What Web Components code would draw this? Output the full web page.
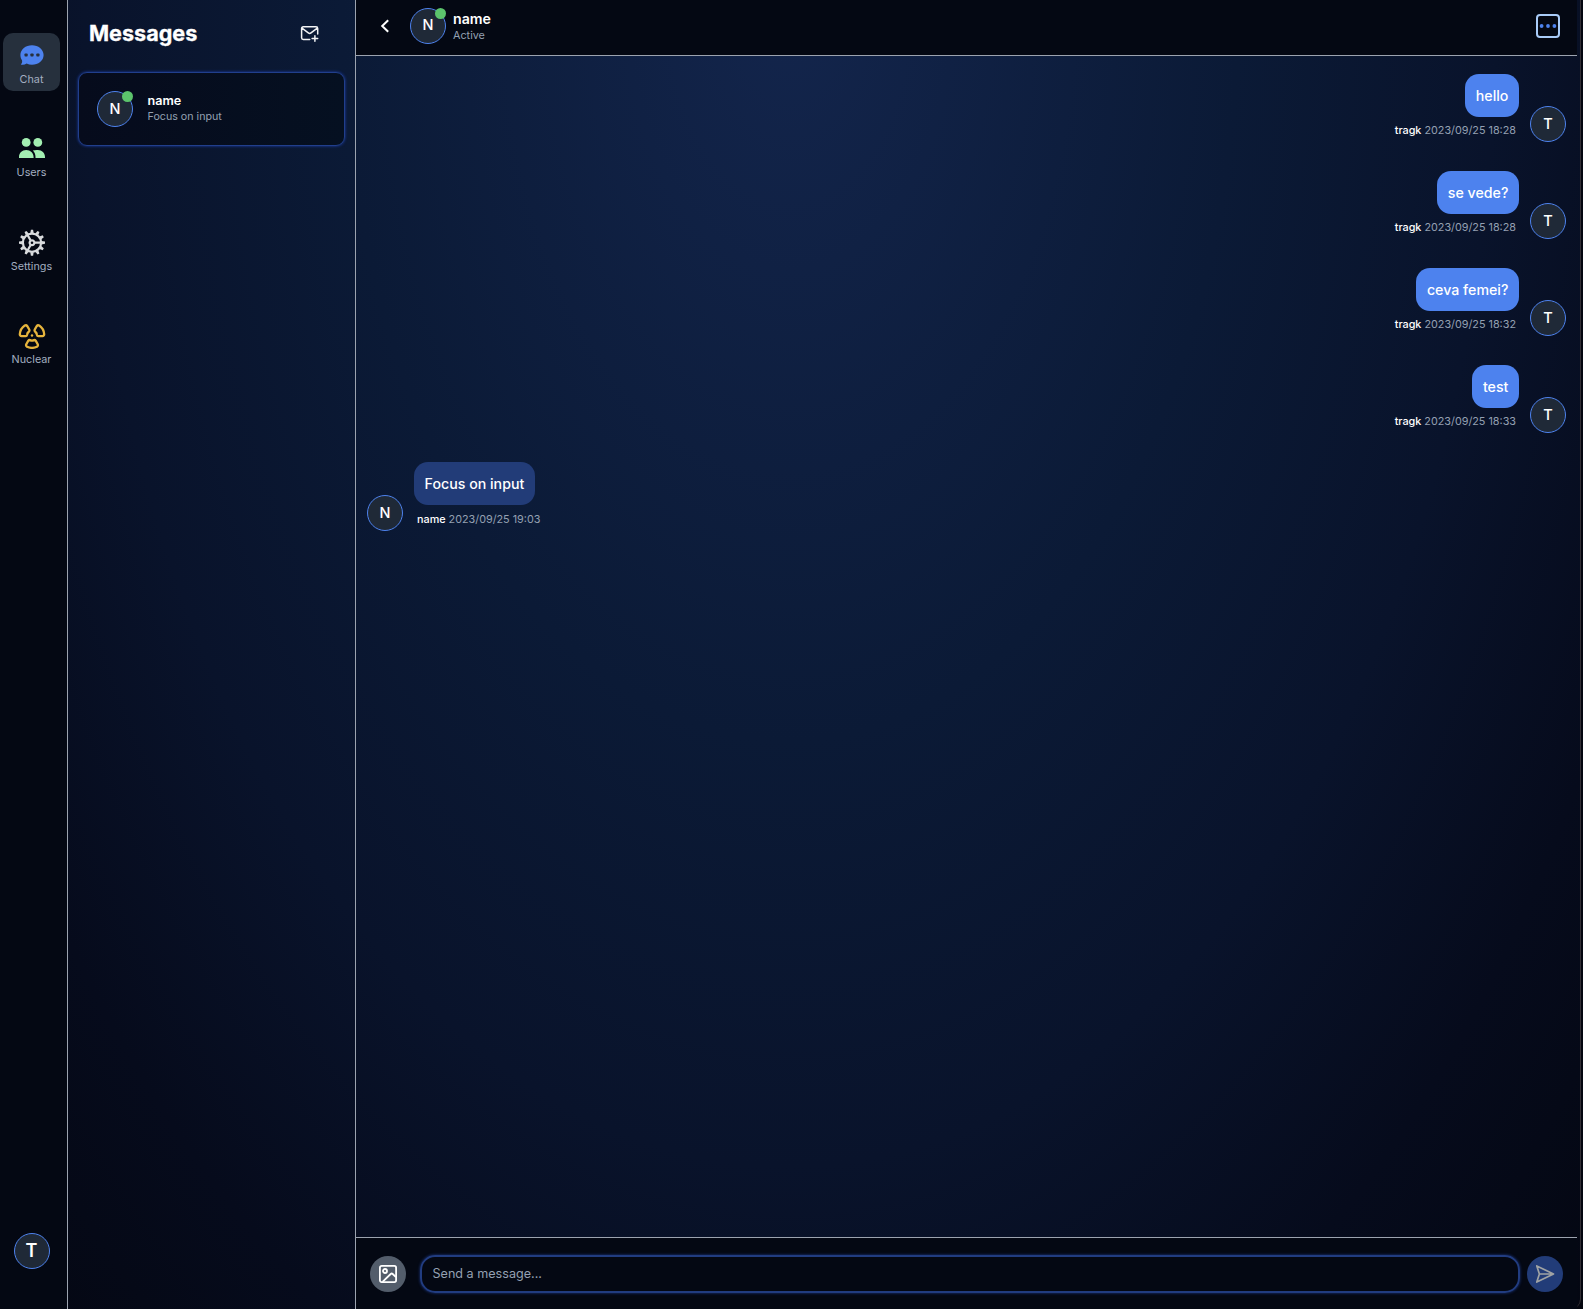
<!DOCTYPE html>
<html lang="en">
<head>
<meta charset="utf-8">
<title>Messages</title>
<style>
html,body{margin:0;height:100%;overflow:hidden;background:#04060f}
body{font-family:Inter,"Liberation Sans",sans-serif}
</style>
</head>
<body>
<chat-app></chat-app>
<script>
const define = (name, render) => customElements.define(name, class extends HTMLElement {
  connectedCallback() {
    if (this.shadowRoot) return;
    this.attachShadow({ mode: 'open' }).innerHTML = render(this);
  }
});

const teeth = Array.from({length: 12}, (_, i) => `<path d="M-1.7-9.5L-1.1-13H1.1L1.7-9.5z" transform="rotate(${i * 30})"/>`).join('');
const blade = 'M-2 4.6Q0 5.5 2 4.6Q3 4.3 3.7 5.2L5.7 8.7Q6.4 10.3 5 11.2Q0 13.6-5 11.2Q-6.4 10.3-5.7 8.7L-3.7 5.2Q-3 4.3-2 4.6z';
const icons = {
  chat: `<svg width="28" height="28" viewBox="-14 -14 28 28"><path fill="#4d82ee" d="M0-9.8C6.3-9.8 11.6-5.6 11.6 0S6.3 9.8 0 9.8C-2 9.8-3.8 9.4-5.3 8.6C-7.2 9.8-9.2 10-11.2 9.6C-9.9 8.2-9.6 6.8-10 5.2C-11.2 3.6-11.6 1.8-11.6 0C-11.6-5.6-6.3-9.8 0-9.8z"/><g fill="#26303f"><rect x="-7.5" y="-1.6" width="3.2" height="3.2" rx=".8"/><rect x="-1.6" y="-1.6" width="3.2" height="3.2" rx=".8"/><rect x="4.3" y="-1.6" width="3.2" height="3.2" rx=".8"/></g></svg>`,
  users: `<svg width="28" height="28" viewBox="-14 -14 28 28" fill="#a3efb2"><circle cx="-5.8" cy="-5.6" r="4.4"/><circle cx="5.8" cy="-5.6" r="4.4"/><path d="M-13 10V9C-13 5-10 2-5.8 2S1.6 5 1.6 9V10zM3.5 10V9C3.5 6.2 2.4 4 .8 2.6Q3 1.8 5.8 2C10 2 13 5 13 9V10z"/></svg>`,
  settings: `<svg width="28" height="28" viewBox="-14 -14.7 28 28" fill="#d9dbdd">${teeth}<g fill="none" stroke="#d9dbdd" stroke-width="2.2"><circle r="9.1"/><circle r="2.4"/><path d="M3 0H9M-1.5-2.6L-4.6-8M-1.5 2.6L-4.6 8"/></g></svg>`,
  nuclear: `<svg width="28" height="28" viewBox="-14 -14.5 28 28" fill="none" stroke="#e6b43c" stroke-width="2.3"><path d="${blade}"/><path d="${blade}" transform="rotate(120)"/><path d="${blade}" transform="rotate(240)"/><circle r="1.2" fill="#e6b43c" stroke="none"/></svg>`,
  mail: `<svg width="20" height="20" viewBox="0 0 20 20" fill="none" stroke="#f2f3f5" stroke-width="1.5" stroke-linecap="round" stroke-linejoin="round"><path d="M9.7 15.5H3.3Q1.6 15.5 1.6 13.8V4.5Q1.6 2.8 3.3 2.8H16Q17.7 2.8 17.7 4.5V10M2 4.2L8.3 8.9Q9.7 9.9 11 8.9L17.3 4.2M14.9 11.7V17.3M12.1 14.5H17.7"/></svg>`,
  back: `<svg width="20" height="20" viewBox="0 0 20 20" fill="none" stroke="#fff" stroke-width="2"><path d="M13.2 4.2L7.2 10L13.2 15.8"/></svg>`,
  image: `<svg width="20" height="20" viewBox="0 0 20 20" fill="none" stroke="#fff" stroke-width="1.8" stroke-linejoin="round"><rect x="1.9" y="1.9" width="16.2" height="16.2" rx="1.8"/><circle cx="7" cy="7" r="2"/><path d="M4.5 17.8L12.7 10Q13.7 9 14.7 10L18 13.2"/></svg>`,
  send: `<svg width="20" height="20" viewBox="0 0 20 20" fill="none" stroke="#a0a3a4" stroke-width="1.7" stroke-linejoin="round"><path d="M1.8 1.9L18.5 10L1.8 18.1L4.4 10zM4.4 10H18"/></svg>`,
  more: `<svg width="20" height="20" viewBox="-10 -10 20 20" fill="#4d82ee"><circle cx="-6.4" r="1.9"/><circle r="1.9"/><circle cx="6.4" r="1.9"/></svg>`
};

define('ui-icon', el => `<style>:host{display:block;line-height:0;flex:none}svg{display:block}</style>${icons[el.getAttribute('name')]}`);

define('user-avatar', el => `<style>
:host{display:flex;flex:none;position:relative;width:36px;height:36px;box-sizing:border-box;border:1px solid #4d82ee;border-radius:50%;background:#1f2937;color:#fff;align-items:center;justify-content:center;font-size:14.5px;font-weight:500;line-height:1}
i{position:absolute;right:-1px;top:-1px;width:11px;height:11px;border-radius:50%;background:#5cc46c}
</style><slot></slot>${el.hasAttribute('online') ? '<i></i>' : ''}`);

define('nav-item', el => `<style>
:host{display:flex;flex-direction:column;align-items:center;box-sizing:border-box;width:57px;height:58px;padding-top:8px;border-radius:10px;color:#a3aec0;font-size:10.8px;line-height:14px}
:host([active]){background:#26303d}
span{margin-top:4px}
</style><ui-icon name="${el.getAttribute('icon')}"></ui-icon><span><slot></slot></span>`);

define('nav-rail', () => `<style>
:host{display:flex;flex-direction:column;align-items:center;box-sizing:border-box;width:68px;padding:33px 4px 40px 0;border-right:1px solid #9ca3af;background:#040813;flex:none}
nav{display:flex;flex-direction:column;gap:35.3px;flex:1}
user-avatar{font-size:18px;font-weight:600}
</style><nav><nav-item icon="chat" active>Chat</nav-item><nav-item icon="users">Users</nav-item><nav-item icon="settings">Settings</nav-item><nav-item icon="nuclear">Nuclear</nav-item></nav><user-avatar>T</user-avatar>`);

define('conversation-card', el => `<style>
:host{display:flex;align-items:center;gap:14.5px;box-sizing:border-box;height:74px;padding:0 18px;border:1.5px solid #213f8c;border-radius:9px;background:linear-gradient(90deg,#060b1c,#051021);box-shadow:0 0 3px #1e40af}
div{margin-top:-2px}
b{display:block;font-size:12.6px;line-height:16px;font-weight:600;color:#fff}
p{margin:0;font-size:10.7px;line-height:15px;color:#94a0b2}
</style><user-avatar online>N</user-avatar><div><b>${el.getAttribute('name')}</b><p><slot></slot></p></div>`);

define('conversation-list', () => `<style>
:host{display:flex;flex-direction:column;box-sizing:border-box;width:288px;padding:0 10px;border-right:1px solid #9ca3af;flex:none}
header{display:flex;justify-content:space-between;align-items:center;height:67px;padding:0 25px 0 11px;margin-bottom:5px}
h1{margin:-2px 0 0;font-size:21.6px;line-height:30px;font-weight:700;color:#fff;-webkit-text-stroke:.3px #fff}
</style><header><h1>Messages</h1><ui-icon name="mail"></ui-icon></header><conversation-card name="name">Focus on input</conversation-card>`);

define('chat-message', el => `<style>
:host{display:flex;align-items:flex-end;gap:11px;height:69px;flex-direction:row-reverse}
:host([incoming]){flex-direction:row}
user-avatar{margin-bottom:1px}
:host([incoming]) user-avatar{margin-bottom:0}
section{display:flex;flex-direction:column;align-items:flex-end;height:69px}
.bubble{height:43px;box-sizing:border-box;padding:0 10.6px;border-radius:14px;background:#4d82ee;color:#fff;font-size:14.2px;font-weight:500;line-height:43px;white-space:nowrap}
.meta{padding:0 3px;margin-top:6px;font-size:10.8px;line-height:16px;color:#94a0b2;white-space:nowrap}
b{font-weight:500;color:#fff}
:host([incoming]) section{align-items:flex-start}
:host([incoming]) .meta{margin-top:7px}
:host([incoming]) .bubble{background:#223c78}
</style><user-avatar>${el.getAttribute('initial')}</user-avatar><section><div class="bubble"><slot></slot></div><div class="meta"><b>${el.getAttribute('from')}</b> ${el.getAttribute('time')}</div></section>`);

define('chat-header', () => `<style>
:host{display:flex;align-items:center;box-sizing:border-box;height:56px;padding:0 17px 4px 19px;border-bottom:1px solid #9ca3af;background:#040813;flex:none}
user-avatar{margin:0 7px 0 15px}
div{flex:1}
b{display:block;font-size:14.2px;line-height:17px;font-weight:600;color:#fff}
p{margin:1px 0 -2px;font-size:10.8px;line-height:16px;color:#94a0b2}
button{display:grid;place-items:center;box-sizing:border-box;width:24px;height:24px;padding:0;border:2px solid #a9cbf8;border-radius:4px;background:none}
</style><ui-icon name="back"></ui-icon><user-avatar online>N</user-avatar><div><b>name</b><p>Active</p></div><button><ui-icon name="more"></ui-icon></button>`);

define('message-composer', () => `<style>
:host{display:flex;align-items:center;box-sizing:border-box;height:72px;padding:0 14px;border-top:1px solid #9ca3af;background:#040813;flex:none}
.round{display:grid;place-items:center;width:36px;height:36px;border-radius:50%;background:#535d6b;flex:none}
.send{background:#223c78}
.field{flex:1;box-sizing:border-box;height:38px;margin:0 7px 0 14px;padding:0 10.5px;border:2px solid #213c80;border-radius:15px;color:#94a0b2;font-size:12.6px;line-height:33px;box-shadow:0 0 3px #1e3a8a}
</style><span class="round"><ui-icon name="image"></ui-icon></span><div class="field">Send a message...</div><span class="round send"><ui-icon name="send"></ui-icon></span>`);

define('chat-panel', () => `<style>
:host{display:flex;flex-direction:column;flex:1;min-width:0}
main{display:flex;flex-direction:column;gap:28px;flex:1;min-height:0;padding:18px 11px 0}
</style><chat-header></chat-header><main>
<chat-message from="tragk" initial="T" time="2023/09/25 18:28">hello</chat-message>
<chat-message from="tragk" initial="T" time="2023/09/25 18:28">se vede?</chat-message>
<chat-message from="tragk" initial="T" time="2023/09/25 18:32">ceva femei?</chat-message>
<chat-message from="tragk" initial="T" time="2023/09/25 18:33">test</chat-message>
<chat-message from="name" initial="N" time="2023/09/25 19:03" incoming>Focus on input</chat-message>
</main><message-composer></message-composer>`);

define('chat-app', () => `<style>
:host{display:flex;box-sizing:border-box;width:1581px;height:1309px;padding-right:3px;border-right:1px solid #332f35;border-bottom-right-radius:10px;background:radial-gradient(ellipse 1120px 1851px at 50% 0,#13254c 0%,#0b1a36 40%,#09132b 63%,#060b1c 82%,#040712 100%)}
</style><nav-rail></nav-rail><conversation-list></conversation-list><chat-panel></chat-panel>`);
</script>
</body>
</html>
